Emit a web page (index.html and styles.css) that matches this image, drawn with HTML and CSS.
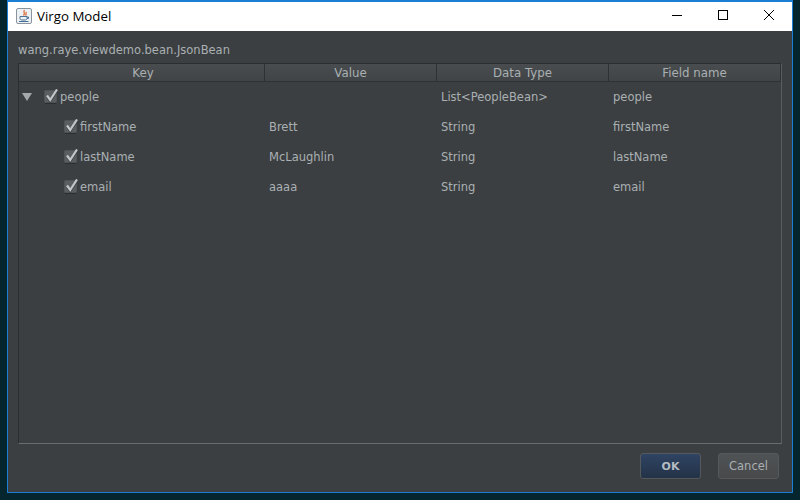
FILE: index.html
```html
<!DOCTYPE html>
<html lang="en">
<head>
  <meta charset="UTF-8">
  <title>Virgo Model</title>
  <link rel="stylesheet" href="styles.css">
</head>
<body>
  <div class="window">
    <div class="titlebar">
      <svg class="java_icon" width="16" height="16" viewBox="0 0 16 16">
        <rect x="0.5" y="0.5" width="15" height="15" rx="1.5" fill="#eef1f4" stroke="#8a94a0"/>
        <path d="M8.5 2 C6.5 4 10 5 7.5 7.5 M10.5 4 C9 5 11 6 9.5 7.5" fill="none" stroke="#d9622b" stroke-width="1.2"/>
        <path d="M4 8.5 H11 V10.5 C11 11.5 10 12 9 12 H6 C5 12 4 11.5 4 10.5 Z M11 9 H12.5 V10.5 H11" fill="none" stroke="#4a7298"/>
        <path d="M3 13.5 H12.5" stroke="#4a7298"/>
      </svg>
      <span class="title">Virgo Model</span>
      <div class="win_buttons">
        <svg width="46" height="29" viewBox="0 0 46 29"><path d="M18 13.5 H28" stroke="#000"/></svg>
        <svg width="46" height="29" viewBox="0 0 46 29"><rect x="18.5" y="8.5" width="9" height="9" fill="none" stroke="#000"/></svg>
        <svg width="46" height="29" viewBox="0 0 46 29"><path d="M18 8 L28 18 M28 8 L18 18" stroke="#000"/></svg>
      </div>
    </div>

    <div class="content">
      <p class="class_name">wang.raye.viewdemo.bean.JsonBean</p>

      <div class="table">
        <div class="head">
          <div class="head_key">Key</div>
          <div>Value</div>
          <div>Data Type</div>
          <div>Field name</div>
        </div>

        <div class="row">
          <div class="key">
            <svg class="arrow" width="10" height="8" viewBox="0 0 10 8"><path d="M0 0 H10 L5 8 Z" fill="#a4a8aa"/></svg>
            <svg class="check" width="15" height="15" viewBox="0 0 15 15"><use href="#tick"/></svg>
            people
          </div>
          <div></div>
          <div>List&lt;PeopleBean&gt;</div>
          <div>people</div>
        </div>
        <div class="row">
          <div class="key sub">
            <svg class="check" width="15" height="15" viewBox="0 0 15 15"><use href="#tick"/></svg>
            firstName
          </div>
          <div>Brett</div>
          <div>String</div>
          <div>firstName</div>
        </div>
        <div class="row">
          <div class="key sub">
            <svg class="check" width="15" height="15" viewBox="0 0 15 15"><use href="#tick"/></svg>
            lastName
          </div>
          <div>McLaughlin</div>
          <div>String</div>
          <div>lastName</div>
        </div>
        <div class="row">
          <div class="key sub">
            <svg class="check" width="15" height="15" viewBox="0 0 15 15"><use href="#tick"/></svg>
            email
          </div>
          <div>aaaa</div>
          <div>String</div>
          <div>email</div>
        </div>
      </div>

      <div class="buttons">
        <button class="btn ok">OK</button>
        <button class="btn cancel">Cancel</button>
      </div>
    </div>
  </div>

  <svg class="defs" width="0" height="0">
    <defs>
      <g id="tick">
        <rect x="0.5" y="1.5" width="12" height="12" rx="1" fill="#5a5e60" stroke="#505456"/>
        <path d="M1 14.5 H12" stroke="#2b2d2f"/>
        <path d="M3 8 L6.2 12.5 L13 2" fill="none" stroke="#3a3d3f" stroke-width="2"/>
        <path d="M3 6.5 L6.2 11 L13 0.5" fill="none" stroke="#c2c6c8" stroke-width="2.2"/>
      </g>
    </defs>
  </svg>
</body>
</html>
```

FILE: styles.css
```css
html, body {
  margin: 0;
  padding: 0;
  height: 100%;
  overflow: hidden;
}
body {
  background-color: #06262f;
  font-family: "DejaVu Sans", sans-serif;
}
.defs {
  display: block;
}
.window {
  width: 786px;
  height: 493px;
  margin-left: 7px;
  box-sizing: border-box;
  border: 1px solid #1a7fd4;
  border-top-width: 2px;
  display: flex;
  flex-direction: column;
  background-color: #3c3f41;
}
.titlebar {
  height: 29px;
  box-sizing: border-box;
  flex-shrink: 0;
  background-color: white;
  display: flex;
  align-items: center;
  padding: 0 0 2px 8px;
}
.java_icon {
  margin-right: 5px;
}
.title {
  font-family: "Open Sans", sans-serif;
  font-size: 13.3px;
  color: black;
}
.win_buttons {
  margin-left: auto;
  display: flex;
  margin-bottom: -2px;
}
.content {
  flex: 1;
  display: flex;
  flex-direction: column;
  padding: 0 10px 13px 10px;
}
.class_name {
  margin: 12px 0 5px 0;
  font-size: 11.5px;
  line-height: 15px;
  color: #a9b0b3;
}
.table {
  flex: 1;
  border: 1px solid #2b2d2e;
  border-right-color: #5a5d5e;
  border-bottom-color: #6a6d6e;
}
.head, .row {
  display: grid;
  grid-template-columns: 246px 172px 172px 172px;
  color: #a9b0b3;
}
.head {
  height: 17px;
  line-height: 18px;
  font-size: 11.8px;
  text-align: center;
  background: linear-gradient(#4a4d4f, #414446);
  border-bottom: 1px solid #2f3132;
}
.head div {
  border-right: 1px solid #2f3132;
  box-sizing: border-box;
}
.head .head_key {
  padding-left: 3px;
}
.row {
  height: 30px;
  line-height: 30px;
  font-size: 11.5px;
}
.row div {
  padding-left: 4px;
}
.row .key {
  display: flex;
  align-items: center;
  padding-left: 3px;
}
.row .sub {
  padding-left: 45px;
}
.arrow {
  margin-right: 12px;
}
.check {
  flex-shrink: 0;
  margin-right: 1px;
  margin-top: -1px;
}
.buttons {
  display: flex;
  justify-content: flex-end;
  gap: 17px;
  padding: 9px 3px 0 0;
}
.btn {
  width: 61px;
  height: 26px;
  padding: 0;
  border: 1px solid #55595b;
  border-radius: 3px;
  font-family: "DejaVu Sans", sans-serif;
  font-size: 11.5px;
  color: #a9b0b3;
}
.ok {
  background: linear-gradient(#2f4463, #233247);
  font-size: 11px;
  font-weight: bold;
  color: #b4bcc2;
}
.cancel {
  background: linear-gradient(#505355, #47494b);
}
```
